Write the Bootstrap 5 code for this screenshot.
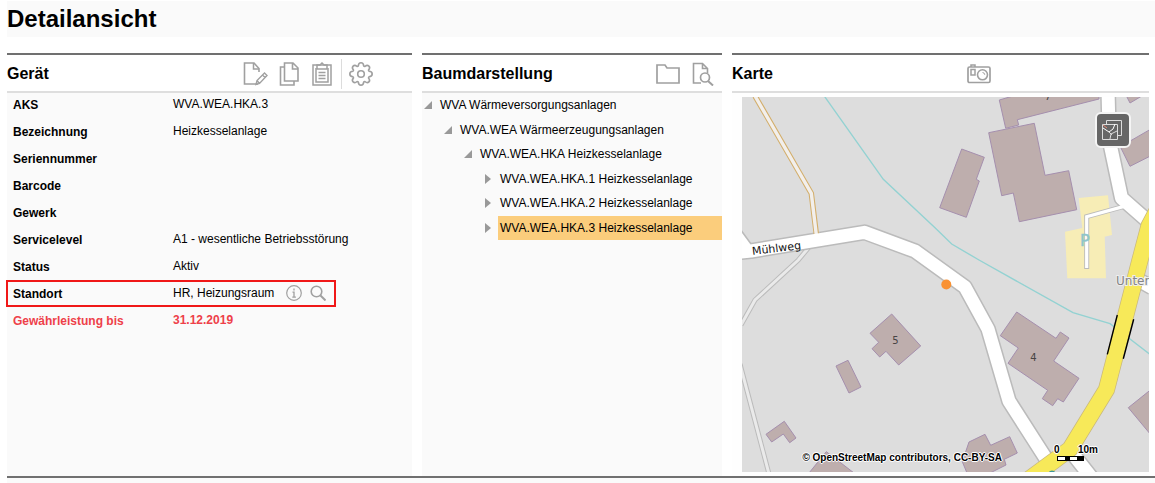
<!DOCTYPE html>
<html lang="de">
<head>
<meta charset="utf-8">
<meta name="viewport" content="width=device-width, initial-scale=1">
<title>Detailansicht</title>
<link href="https://cdn.jsdelivr.net/npm/bootstrap@5.3.0/dist/css/bootstrap.min.css" rel="stylesheet">
<style>
body { font-family: "Liberation Sans", Arial, sans-serif; font-size: 12px; color: #000; background: #fff; }
.page-title { margin: 1px 0 16px 7px; background: #fafafa; font-size: 24px; line-height: 36px; font-weight: 700; }
.panels { display: grid; grid-template-columns: 405fr 300fr 417fr; gap: 10px; margin: 0 6px 0 7px; }
.panel { display: flex; flex-direction: column; min-width: 0; border-top: 2px solid #707070; }
.panel-head { height: 38px; border-bottom: 2px solid #dedede; }
.panel-head + * { flex-grow: 1; background: #fafafa; }
.panel-head h2 { font-size: 16px; line-height: 34px; padding-top: 2px; font-weight: 700; }
.tool { padding: 0; border: 0; background: none; line-height: 0; }
.tool svg { fill: none; stroke: #a0a0a0; stroke-width: 2; }
.tools-device { gap: 10px; margin-right: 39px; padding-top: 1px; }
.tools-tree { gap: 11px; margin-right: 8px; padding-top: 1px; }
.tools-map { margin-right: 157px; padding-top: 1px; }
.divider { width: 1px; height: 30px; background: #dcdcdc; margin: 0 -3px 0 -2px; }
.fact { width: 326px; max-width: 100%; line-height: 23px; margin: 0 0 4px 1px; padding-left: 5px; }
.fact dt { width: 160px; flex: none; line-height: 24px; height: 23px; }
.fact dd { line-height: 22px; height: 22px; }
.fact-marked { outline: 2px solid #f01818; }
.fact-due { color: #ee4049; font-weight: 700; }
.tree { height: 147px; }
.tree-row { line-height: 24px; }
.tree-toggle { width: 16px; flex: none; padding: 0 0 0 2px; border: 0; background: none; text-align: left; line-height: 0; }
.tree-toggle svg { fill: #999; }
.tree-link { color: #000; text-decoration: none; padding-left: 2px; flex-grow: 1; white-space: nowrap; }
.tree-link.current { background: #fbcd7c; }
.lvl1 { padding-left: 20px; }
.lvl2 { padding-left: 40px; }
.lvl3 { padding-left: 60px; }
.map-area { background: #fefefe !important; padding: 4px 0 4px 10px; }
.map { position: relative; overflow: hidden; height: 375px; background: #ddd; }
.map-canvas { width: 100%; height: 100%; display: block; }
.bldg { fill: #beaead; stroke: #a58fae; stroke-width: 1; }
.road-edge { fill: none; stroke: #bbb; stroke-width: 16; stroke-linejoin: round; }
.road { fill: none; stroke: #fff; stroke-width: 13; stroke-linejoin: round; }
.path-edge { fill: none; stroke: #bbb; stroke-width: 5; }
.path-fill { fill: none; stroke: #eaeaea; stroke-width: 3; }
.map-text { font-family: "DejaVu Sans", sans-serif; }
.layer-btn { position: absolute; top: 15px; right: 18px; width: 36px; height: 36px; border: 2px solid #f5f5f5; border-radius: 6px; background: #666; padding: 0; line-height: 0; }
.credit, .scale { position: absolute; font-size: 10px; font-weight: 700; line-height: 12px; text-shadow: 1px 0 #fff, -1px 0 #fff, 0 1px #fff, 0 -1px #fff, 0 0 2px #fff; }
.credit { right: 147px; bottom: 8px; white-space: nowrap; }
.scale { right: 51px; bottom: 11px; width: 44px; }
.scale-bar { width: 27px; height: 5px; margin-left: 3px; border: 1px solid #000; background: linear-gradient(90deg, #fff 7px, #000 7px 12px, #fff 12px 19px, #000 19px); }
.page-foot { height: 7px; margin-left: 7px; border-top: 2px solid #707070; background: #fafafa; }
</style>
</head>
<body>
<h1 class="page-title">Detailansicht</h1>
<main class="panels">
  <section class="panel">
    <header class="panel-head d-flex align-items-center">
      <h2 class="m-0 me-auto">Gerät</h2>
      <div class="tools-device d-flex align-items-center">
        <button class="tool" type="button" aria-label="Bearbeiten"><svg width="26" height="24"><path d="M16 10V6.500L11 1H1.500v21H15" stroke-width="1.600"/><path d="M10.500 1v6H16" stroke-width="1.500"/><path d="M13 22.500l1-4 7.500-7.500 2.500 2.500-7.500 8zM14 18.500l2.500 3M19.500 13l2.500 2.500" stroke-width="1.400"/></svg></button>
        <button class="tool" type="button" aria-label="Kopieren"><svg width="22" height="24"><path d="M5.500 1H14l5 5v13H5.500zM13.500 1v6H19M5.500 5H1.500v18H15v-4" stroke-width="1.600"/></svg></button>
        <button class="tool" type="button" aria-label="Einfügen"><svg width="22" height="24"><path d="M2 3h18v20H2z" stroke-width="1.500"/><path d="M5 6v14h12V6" stroke-width="1.500"/><path d="M6 3h3l2-2 2 2h3v4H6zM7.500 10.500h7M7.500 13.500h7M7.500 16.500h7" stroke-width="1.500"/></svg></button>
        <span class="divider"></span>
        <button class="tool" type="button" aria-label="Einstellungen"><svg width="24" height="24"><path stroke-width="1.600" stroke-linejoin="round" d="M9.300 4q.2-3.200 2.700-3.200T14.700 4l1.200.5q2.300-2 4-.4t-.4 4l.5 1.200q3.200.2 3.200 2.700T20 14.700l-.5 1.200q2 2.300.4 4t-4-.4l-1.200.5q-.2 3.200-2.700 3.200T9.300 20l-1.200-.5q-2.300 2-4 .4t.4-4L4 14.700Q.8 14.500.8 12T4 9.300l.5-1.200q-2-2.300-.4-4t4 .4z"/><circle cx="12" cy="12" r="3.300" stroke-width="1.600"/></svg></button>
      </div>
    </header>
    <dl class="m-0">
      <div class="fact d-flex"><dt>AKS</dt><dd class="m-0">WVA.WEA.HKA.3</dd></div>
      <div class="fact d-flex"><dt>Bezeichnung</dt><dd class="m-0">Heizkesselanlage</dd></div>
      <div class="fact d-flex"><dt>Seriennummer</dt><dd class="m-0"></dd></div>
      <div class="fact d-flex"><dt>Barcode</dt><dd class="m-0"></dd></div>
      <div class="fact d-flex"><dt>Gewerk</dt><dd class="m-0"></dd></div>
      <div class="fact d-flex"><dt>Servicelevel</dt><dd class="m-0 text-nowrap">A1 - wesentliche Betriebsstörung</dd></div>
      <div class="fact d-flex"><dt>Status</dt><dd class="m-0">Aktiv</dd></div>
      <div class="fact fact-marked d-flex"><dt>Standort</dt>
        <dd class="m-0 d-flex flex-grow-1 align-items-center"><span class="me-auto">HR, Heizungsraum</span>
          <button class="tool me-2" type="button" aria-label="Information"><svg width="16" height="16"><circle cx="8" cy="8" r="7.300" stroke-width="1.200"/><path d="M8 3.500v2M6.500 7.200H8v5M6.300 12.200h3.600" stroke-width="1.300"/></svg></button>
          <button class="tool me-2" type="button" aria-label="Suchen"><svg width="16" height="16"><circle cx="6.500" cy="6.500" r="5.300" stroke-width="1.600"/><path d="M10.500 10.500l5 5"/></svg></button>
        </dd></div>
      <div class="fact fact-due d-flex"><dt>Gewährleistung bis</dt><dd class="m-0">31.12.2019</dd></div>
    </dl>
  </section>

  <section class="panel">
    <header class="panel-head d-flex align-items-center">
      <h2 class="m-0 me-auto">Baumdarstellung</h2>
      <div class="tools-tree d-flex align-items-center">
        <button class="tool" type="button" aria-label="Ordner"><svg width="26" height="22"><path d="M2 20V2h8l2 3h12v15z" stroke-width="1.700"/></svg></button>
        <button class="tool" type="button" aria-label="Dokument suchen"><svg width="22" height="24"><path d="M9 21H1.500V1.500h9l5 5V11M10.500 1.500v5h5" stroke-width="1.600"/><circle cx="13" cy="15.500" r="4.500" stroke-width="1.700"/><path d="M16 19l5 4.500"/></svg></button>
      </div>
    </header>
    <div>
      <div class="tree d-flex flex-column justify-content-between">
        <div class="tree-row d-flex"><button class="tree-toggle" type="button" aria-label="Zuklappen"><svg width="8" height="8"><path d="M8 0v8H0z"/></svg></button><a class="tree-link" href="#">WVA Wärmeversorgungsanlagen</a></div>
        <div class="tree-row lvl1 d-flex"><button class="tree-toggle" type="button" aria-label="Zuklappen"><svg width="8" height="8"><path d="M8 0v8H0z"/></svg></button><a class="tree-link" href="#">WVA.WEA Wärmeerzeugungsanlagen</a></div>
        <div class="tree-row lvl2 d-flex"><button class="tree-toggle" type="button" aria-label="Zuklappen"><svg width="8" height="8"><path d="M8 0v8H0z"/></svg></button><a class="tree-link" href="#">WVA.WEA.HKA Heizkesselanlage</a></div>
        <div class="tree-row lvl3 d-flex"><button class="tree-toggle" type="button" aria-label="Aufklappen"><svg width="8" height="12"><path d="M1 1l6 5-6 5z"/></svg></button><a class="tree-link" href="#">WVA.WEA.HKA.1 Heizkesselanlage</a></div>
        <div class="tree-row lvl3 d-flex"><button class="tree-toggle" type="button" aria-label="Aufklappen"><svg width="8" height="12"><path d="M1 1l6 5-6 5z"/></svg></button><a class="tree-link" href="#">WVA.WEA.HKA.2 Heizkesselanlage</a></div>
        <div class="tree-row lvl3 d-flex"><button class="tree-toggle" type="button" aria-label="Aufklappen"><svg width="8" height="12"><path d="M1 1l6 5-6 5z"/></svg></button><a class="tree-link current" href="#">WVA.WEA.HKA.3 Heizkesselanlage</a></div>
      </div>
    </div>
  </section>

  <section class="panel">
    <header class="panel-head d-flex align-items-center">
      <h2 class="m-0 me-auto">Karte</h2>
      <div class="tools-map d-flex">
        <button class="tool" type="button" aria-label="Foto"><svg width="26" height="20"><rect x="2" y="3" width="22" height="15.500" rx="1.500" stroke-width="1.700"/><path d="M5 3V1h4v2" stroke-width="1.500"/><rect x="5" y="5.500" width="4" height="5.500" stroke-width="1.500"/><circle cx="16.500" cy="10.800" r="5" stroke-width="1.600"/><path d="M16.500 8.500a2.500 2.500 0 0 1 2.300 2.300" stroke-width="1"/></svg></button>
      </div>
    </header>
    <div class="map-area">
      <div class="map">
        <svg class="map-canvas" viewBox="742 97 407 375" preserveAspectRatio="xMaxYMid slice" role="img" aria-label="Lageplan">
          <path d="M1078.700 198L1108 195.300 1112 235 1104.700 236.700 1106 278.300H1067.300L1065 231.700 1082.300 228z" fill="#f7edb6"/>
          <path d="M824.700 96.700L883.300 179.300 935 227.700 951.700 244 979 260 1073 312.700 1110 323.700 1117 329 1150 354.300" fill="none" stroke="#93d2d2" stroke-width="1.400"/>
          <g class="bldg">
            <path d="M999.300 100L1013 96 1099 96V99L1017.300 119.700 1018.700 125 1005.700 128.300z"/>
            <path d="M988.700 132.700L1034.300 123.300 1045 175.300 1068.700 170.700 1076.700 209.700 1019.300 221.700 1013.300 193 1001.700 195.700z"/>
            <path d="M961.700 149L984.300 157.300 976.300 179.300 979.300 181 966.300 217.300 939.700 207.700z"/>
            <path d="M1126.700 96.500L1130 103 1141 96.500z"/>
            <path d="M1120.300 146.700L1130 166.300 1151 155.700V129z"/>
            <path d="M891.700 314L920.700 346 898.700 365 886 351.300 879.700 357 872 348.700 878.700 342.300 870 333.300z"/>
            <path d="M836 366L848 360.300 861 387 849 393z"/>
            <path d="M766 434.300L784.300 421.300 796 438 789.700 442.700 783.300 434 771.700 442z"/>
            <path d="M809 473L826.300 451.700 854 473z"/>
            <path d="M1016.700 312L1056 338.300 1060.300 332 1069 338 1053.700 361 1079 378.300 1063.300 402 1057.700 398.700 1052.700 405.700 1042.300 398.700 1047.700 390.300 1008 363.300 1018.300 348 1000.300 335.700z"/>
            <path d="M1151 389.500L1128.300 407.700 1151 435z"/>
            <path d="M969 442L985 434.300 990.700 445.300 1009.700 436.700 1017.300 453 1004.300 459.300 1006 465 990 473H967L962.300 461.700z"/>
          </g>
          <path class="path-edge" d="M810 246L798.300 260 755 300 741 325M740 364L769 474"/>
          <path class="path-fill" d="M810 246L798.300 260 755 300 741 325M740 364L769 474"/>
          <path class="path-edge" d="M1123 206.700L1086.700 216.700V269"/>
          <g class="road-edge">
            <path d="M734 233L748 252M736 252.500L751 251 864.500 232.300 915 251 965 287 988 329 1009 401 1050 465"/>
            <path d="M1108 90L1109 130 1110.500 146 1121.500 198 1150 223M1065 444L1095 482M1135 278L1152 287.500"/>
          </g>
          <path d="M755 96L811.300 193.300 816.700 237" fill="none" stroke="#d3ae6b" stroke-width="5.500"/>
          <path d="M755 96L811.300 193.300 816.700 238" fill="none" stroke="#f2efec" stroke-width="3.400"/>
          <g class="road">
            <path d="M734 233L748 252M736 252.500L751 251 864.500 232.300 915 251 965 287 988 329 1009 401 1050 465"/>
            <path d="M1108 90L1109 130 1110.500 146 1121.500 198 1150 223M1065 444L1095 482M1135 278L1152 287.500"/>
          </g>
          <path d="M1124 206.400L1086.700 216.700V268" fill="none" stroke="#fff" stroke-width="3.200"/>
          <path d="M1160 205L1149 226 1140 260 1106.500 389.500 1070 449 1028 480" fill="none" stroke="#c9b87c" stroke-width="17" stroke-linejoin="round"/>
          <path d="M1160 205L1149 226 1140 260 1106.500 389.500 1070 449 1028 480" fill="none" stroke="#f7e959" stroke-width="15.600" stroke-linejoin="round"/>
          <path d="M1117.300 315L1107.300 354.300M1133.700 319.300L1123.300 358.700" stroke="#000" stroke-width="1.400"/>
          <circle cx="1052" cy="474" r="3.500" fill="#3f9598"/>
          <circle cx="946.300" cy="284.500" r="5" fill="#f99132"/>
          <g class="map-text" font-size="10" fill="#484444" text-anchor="middle">
            <text x="895.500" y="344">5</text><text x="1033.500" y="361">4</text><text x="1048" y="100">7</text>
          </g>
          <text class="map-text" x="1080" y="246" font-size="16" fill="#8ec5cb" stroke="#8ec5cb" stroke-width=".5">P</text>
          <text class="map-text" x="752.500" y="255" font-size="11" fill="#111" transform="rotate(-7 752.500 255)">Mühlweg</text>
          <text class="map-text" x="1116" y="285" font-size="12" fill="#858585" stroke="#eee" stroke-width="2" paint-order="stroke">Unter</text>
        </svg>
        <button class="layer-btn" type="button" aria-label="Ebenen"><svg width="32" height="32" fill="none" stroke="#ddd" stroke-width="1"><path d="M9.500 10V6.500h15v15H21"/><path d="M5.500 10.500h15v15h-15z"/><path d="M6 14l6 4 4-3 2-5" stroke="#fff"/><path d="M20 17l-6 3-1 5M12 18l3 3"/><path d="M6 11l4 3" stroke="#e58b76"/></svg></button>
        <div class="credit">© OpenStreetMap contributors, CC-BY-SA</div>
        <div class="scale"><div class="d-flex justify-content-between"><span>0</span><span>10m</span></div><div class="scale-bar"></div></div>
      </div>
    </div>
  </section>
</main>
<footer class="page-foot"></footer>
<script src="https://cdn.jsdelivr.net/npm/bootstrap@5.3.0/dist/js/bootstrap.bundle.min.js"></script>
</body>
</html>
